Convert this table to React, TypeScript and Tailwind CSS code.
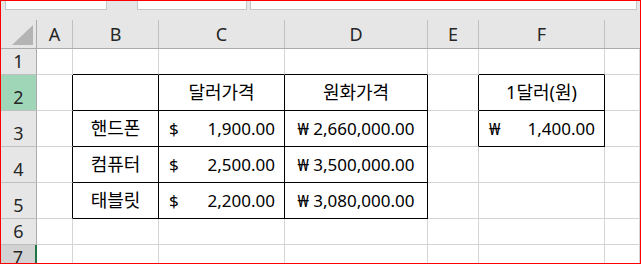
import React from "react";

type Money = { sym: string; num: string };
type Cell = string | Money | null;

type Row = { n: number; tall: boolean; cells: Cell[] };

const LETTERS = ["A", "B", "C", "D", "E", "F", ""];
const GRID = "grid grid-cols-[36px_36px_86px_126px_143px_51px_126px_1fr]";

const rows: Row[] = [
  { n: 1, tall: false, cells: [null, null, null, null, null, null, null] },
  { n: 2, tall: true, cells: [null, null, "달러가격", "원화가격", null, "1달러(원)", null] },
  {
    n: 3,
    tall: true,
    cells: [null, "핸드폰", { sym: "$", num: "1,900.00" }, "₩ 2,660,000.00", null, { sym: "₩", num: "1,400.00" }, null],
  },
  { n: 4, tall: true, cells: [null, "컴퓨터", { sym: "$", num: "2,500.00" }, "₩ 3,500,000.00", null, null, null] },
  { n: 5, tall: true, cells: [null, "태블릿", { sym: "$", num: "2,200.00" }, "₩ 3,080,000.00", null, null, null] },
  { n: 6, tall: false, cells: [null, null, null, null, null, null, null] },
  { n: 7, tall: false, cells: [null, null, null, null, null, null, null] },
];

// cells that sit inside one of the two bordered blocks (B2:D5 and F2:F3)
const inBox = (r: number, c: number) =>
  (r >= 2 && r <= 5 && c >= 1 && c <= 3) || (r >= 2 && r <= 3 && c === 5);

function RowHeader({ n, tall }: { n: number; tall: boolean }) {
  const bg = n === 2 ? "bg-[#a0d6b8]" : n === 7 ? "bg-[#d2d2d2]" : "bg-[#e6e6e6]";
  const edge = n === 7 ? "border-r-2 border-r-[#217346]" : "border-r border-r-[#ababab]";
  return (
    <div
      className={`${bg} ${edge} ${tall ? "h-[36px]" : "h-[26px]"} border-b border-b-[#bfbfbf] flex items-end justify-center pb-[1px] text-[18px] leading-[24px] text-[#262626]`}
    >
      {n}
    </div>
  );
}

function DataCell({ r, c, value, tall }: { r: number; c: number; value: Cell; tall: boolean }) {
  const right = inBox(r, c) || inBox(r, c + 1) ? "border-r-black" : "border-r-[#d4d4d4]";
  const bottom = inBox(r, c) || inBox(r + 1, c) ? "border-b-black" : "border-b-[#d4d4d4]";
  const base = `${tall ? "h-[36px]" : "h-[26px]"} border-r border-b ${right} ${bottom} flex items-center text-[17px] text-black whitespace-nowrap`;

  if (value && typeof value === "object") {
    return (
      <div className={`${base} justify-between pl-[10px] pr-[9px]`}>
        <span>{value.sym}</span>
        <span>{value.num}</span>
      </div>
    );
  }
  // hangul labels read a touch larger than the digits
  const hangul = typeof value === "string" && /[가-힣]/.test(value);
  return (
    <div className={`${base} justify-center`}>
      <span className={hangul ? "text-[18px]" : ""}>{value}</span>
    </div>
  );
}

export default function App() {
  return (
    <div className="w-[641px] h-[264px] border border-[#ff0000] bg-white overflow-hidden flex flex-col font-['Noto_Sans','Noto_Sans_CJK_KR',sans-serif]">
      {/* name box / formula bar strip */}
      <div className="h-[9px] bg-[#e6e6e6] flex shrink-0">
        <div className="ml-[4px] w-[102px] bg-white border-x border-b border-[#c6c6c6]" />
        <div className="ml-[30px] w-[110px] bg-white border-x border-b border-[#c6c6c6]" />
        <div className="ml-[3px] w-[387px] bg-white border-x border-b border-[#c6c6c6]" />
      </div>
      <div className="h-[10px] bg-[#e6e6e6] shrink-0" />

      {/* column letters */}
      <div className={`${GRID} h-[29px] bg-[#e6e6e6] border-b border-[#ababab] shrink-0`}>
        <div className="border-r border-[#ababab] flex items-end justify-end pr-[2px] pb-[2px]">
          <svg width="22" height="21" viewBox="0 0 22 21">
            <polygon points="21,0 21,20 0,20" fill="#b4b4b4" />
          </svg>
        </div>
        {LETTERS.map((l, i) => (
          <div
            key={i}
            className={`${i < 6 ? "border-r border-[#c0c0c0]" : ""} flex items-center justify-center text-[18px] leading-none text-[#262626]`}
          >
            {l}
          </div>
        ))}
      </div>

      {rows.map((row) => (
        <div key={row.n} className={`${GRID} shrink-0`}>
          <RowHeader n={row.n} tall={row.tall} />
          {row.cells.map((v, c) => (
            <DataCell key={c} r={row.n} c={c} value={v} tall={row.tall} />
          ))}
        </div>
      ))}
    </div>
  );
}
